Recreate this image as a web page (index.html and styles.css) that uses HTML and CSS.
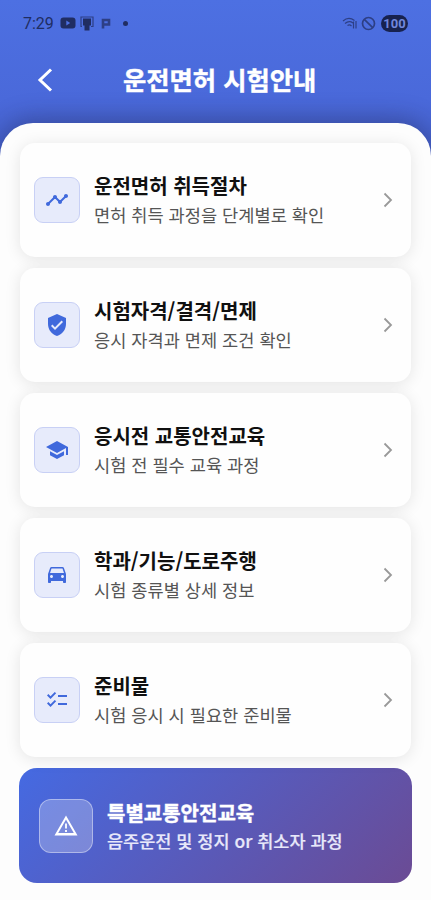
FILE: index.html
```
<!DOCTYPE html>
<html lang="ko">
<head>
    <meta charset="UTF-8">
    <meta name="viewport" content="width=device-width, initial-scale=1.0">
    <title>운전면허 시험안내</title>
    <link rel="stylesheet" href="styles.css">
</head>
<body>
    <div class="app">
        <div class="statusBar">
            <span class="time">7:29</span>
            <svg class="youtube" width="16" height="12" viewBox="0 0 16 12"><rect x="0.5" y="0.5" width="15" height="11" rx="3"/><path class="play" d="M6.3 3.6v4.8L10.2 6z"/></svg>
            <svg class="cast" width="14" height="15" viewBox="0 0 14 15"><path class="line" d="M2 10.5H1V1h12v9.500h-2"/><path d="M3 2.500h8v7H9.500V14.500h-5V9.500H3z"/></svg>
            <svg class="parking" width="10" height="11" viewBox="0 0 10 11"><path class="thick" d="M2 10.500V2h6v4.500H3"/></svg>
            <span class="dot"></span>
            <div class="statusRight">
                <svg width="16" height="13" viewBox="0 0 16 13"><path class="line" d="M1 4C4.500 1 9 1 12.500 3.500M3 6.500C6 4 9 4.500 11 6M5.500 8.500c1.500-1 2.500-1 4 .5M11.500 4.500v7M14 4v7.500"/></svg>
                <svg width="15" height="15" viewBox="0 0 15 15"><circle class="ring" cx="7.500" cy="7.500" r="6"/><path class="ring" d="M3.300 3.300l8.400 8.400"/></svg>
                <span class="battery">100</span>
            </div>
        </div>

        <div class="header">
            <svg class="back" width="16" height="24" viewBox="0 0 16 24"><path d="M14 1.500L3 12l11 10.500"/></svg>
            <h1>운전면허 시험안내</h1>
        </div>

        <div class="content">
            <div class="card">
                <div class="icon">
                    <svg viewBox="0 0 24 24"><path d="M23 8c0 1.100-.9 2-2 2-.18 0-.35-.02-.51-.07l-3.560 3.550c.05.16.07.34.07.52 0 1.100-.9 2-2 2s-2-.9-2-2c0-.18.02-.36.07-.52l-2.550-2.550c-.16.05-.34.07-.52.07s-.36-.02-.52-.07l-4.550 4.560c.05.16.07.33.07.51 0 1.100-.9 2-2 2s-2-.9-2-2 .9-2 2-2c.18 0 .35.02.51.07l4.560-4.550C8.020 9.360 8 9.180 8 9c0-1.100.9-2 2-2s2 .9 2 2c0 .18-.02.36-.07.52l2.550 2.550c.16-.05.34-.07.52-.07s.36.02.52.07l3.550-3.560C19.020 8.350 19 8.180 19 8c0-1.100.9-2 2-2s2 .9 2 2z"/></svg>
                </div>
                <div class="text">
                    <h2>운전면허 취득절차</h2>
                    <p>면허 취득 과정을 단계별로 확인</p>
                </div>
                <svg class="arrow" viewBox="0 0 10 16"><path d="M1.500 1.500L8 8l-6.500 6.500"/></svg>
            </div>

            <div class="card">
                <div class="icon">
                    <svg viewBox="0 0 24 24"><path d="M12 1L3 5v6c0 5.550 3.840 10.740 9 12 5.160-1.260 9-6.450 9-12V5l-9-4zm-2 16l-4-4 1.410-1.410L10 14.170l6.590-6.590L18 9l-8 8z"/></svg>
                </div>
                <div class="text">
                    <h2>시험자격/결격/면제</h2>
                    <p>응시 자격과 면제 조건 확인</p>
                </div>
                <svg class="arrow" viewBox="0 0 10 16"><path d="M1.500 1.500L8 8l-6.500 6.500"/></svg>
            </div>

            <div class="card">
                <div class="icon">
                    <svg viewBox="0 0 24 24"><path d="M5 13.180v4L12 21l7-3.820v-4L12 17l-7-3.820zM12 3L1 9l11 6 9-4.910V17h2V9L12 3z"/></svg>
                </div>
                <div class="text">
                    <h2>응시전 교통안전교육</h2>
                    <p>시험 전 필수 교육 과정</p>
                </div>
                <svg class="arrow" viewBox="0 0 10 16"><path d="M1.500 1.500L8 8l-6.500 6.500"/></svg>
            </div>

            <div class="card">
                <div class="icon">
                    <svg viewBox="0 0 24 24"><path d="M18.920 5.010C18.720 4.420 18.160 4 17.500 4h-11c-.66 0-1.210.42-1.420 1.010L3 11v8c0 .55.45 1 1 1h1c.55 0 1-.45 1-1v-1h12v1c0 .55.45 1 1 1h1c.55 0 1-.45 1-1v-8l-2.080-5.990zM6.500 15c-.83 0-1.500-.67-1.500-1.500S5.670 12 6.500 12s1.500.67 1.500 1.500S7.330 15 6.500 15zm11 0c-.83 0-1.500-.67-1.500-1.500s.67-1.500 1.500-1.500 1.500.67 1.500 1.500-.67 1.500-1.500 1.500zM5 10l1.500-4.500h11L19 10H5z"/></svg>
                </div>
                <div class="text">
                    <h2>학과/기능/도로주행</h2>
                    <p>시험 종류별 상세 정보</p>
                </div>
                <svg class="arrow" viewBox="0 0 10 16"><path d="M1.500 1.500L8 8l-6.500 6.500"/></svg>
            </div>

            <div class="card">
                <div class="icon">
                    <svg viewBox="0 0 24 24"><path d="M22 7h-9v2h9V7zm0 8h-9v2h9v-2zM5.540 11L2 7.460l1.410-1.410 2.120 2.120 4.240-4.240 1.410 1.410L5.540 11zm0 8L2 15.460l1.410-1.410 2.120 2.120 4.240-4.240 1.410 1.410L5.540 19z"/></svg>
                </div>
                <div class="text">
                    <h2>준비물</h2>
                    <p>시험 응시 시 필요한 준비물</p>
                </div>
                <svg class="arrow" viewBox="0 0 10 16"><path d="M1.500 1.500L8 8l-6.500 6.500"/></svg>
            </div>

            <div class="banner">
                <div class="icon">
                    <svg viewBox="0 0 24 24"><path d="M12 5.500L19.800 19H4.200L12 5.500M12 1.500L.5 21.500h23L12 1.500zm.9 14.500h-1.800v2h1.800v-2zm0-6.500h-1.800v5h1.800v-5z"/></svg>
                </div>
                <div class="text">
                    <h2>특별교통안전교육</h2>
                    <p>음주운전 및 정지 or 취소자 과정</p>
                </div>
            </div>
        </div>
    </div>
</body>
</html>
```
FILE: styles.css
```
* {
    margin: 0;
    padding: 0;
    box-sizing: border-box;
}

body {
    font-family: 'Noto Sans CJK KR', sans-serif;
    background-color: #fdfdfd;
}

.app {
    height: 900px;
    overflow: hidden;
    background: linear-gradient(#4d70e2 0, #4a69da 100px, #4560ca 160px);
}

.statusBar {
    display: flex;
    align-items: center;
    height: 46px;
    padding: 0 23px;
    color: #202d62;
    fill: #202d62;
}

.time {
    width: 37px;
    font-family: Roboto, sans-serif;
    font-size: 16px;
}

.play {
    fill: #4d70e2;
}

.cast {
    margin-left: 4px;
}

.parking {
    margin-left: 7px;
}

.line,
.thick,
.ring {
    fill: none;
    stroke: #2d3f85;
    stroke-width: 1.2;
}

.thick {
    stroke-width: 2.6;
}

.ring {
    stroke-width: 1.7;
}

.dot {
    width: 5px;
    height: 5px;
    margin-left: 12px;
    border-radius: 50%;
    background-color: #202d62;
}

.statusRight {
    display: flex;
    align-items: center;
    gap: 3px;
    margin-left: auto;
}

.battery {
    width: 27px;
    height: 17px;
    margin-left: 2px;
    border-radius: 9px;
    background-color: #17224f;
    color: #7187dc;
    font-family: Roboto, sans-serif;
    font-size: 13px;
    font-weight: 700;
    line-height: 17px;
    text-align: center;
}

.header {
    display: flex;
    align-items: center;
    height: 77px;
    padding: 0 37px 9px;
}

.back {
    fill: none;
    stroke: #fff;
    stroke-width: 3;
}

.header h1 {
    margin: 0 0 2px 70px;
    color: #fff;
    font-size: 25.3px;
    line-height: 36px;
    white-space: nowrap;
    -webkit-text-stroke: 0.4px #fff;
}

.content {
    height: 777px;
    padding: 20px 19px 0;
    border-radius: 33px 33px 0 0;
    background-color: #fdfdfd;
    box-shadow: 0 -4px 24px rgba(30, 35, 80, 0.4);
}

.card {
    position: relative;
    display: flex;
    align-items: center;
    height: 114px;
    margin: 0 1px 11.1px;
    padding: 0 18px 0 14px;
    border-radius: 15px;
    background-color: #fefefe;
    box-shadow: 0 2px 16px rgba(0, 0, 0, 0.1);
}

.icon {
    display: flex;
    align-items: center;
    justify-content: center;
    flex-shrink: 0;
    width: 46px;
    height: 46px;
    border: 1px solid #c8d0f5;
    border-radius: 9px;
    background-color: #e7ebfb;
}

.icon svg {
    width: 24px;
    height: 24px;
    fill: #4069dc;
}

.text {
    flex: 1;
    margin: 0 0 0 14px;
    white-space: nowrap;
}

.text h2 {
    color: #101010;
    font-size: 20px;
    line-height: 30px;
}

.text p {
    color: #555;
    font-size: 17.6px;
    line-height: 28px;
}

.arrow {
    width: 10px;
    height: 16px;
    fill: none;
    stroke: #999;
    stroke-width: 1.8;
}

.banner {
    display: flex;
    align-items: center;
    height: 115px;
    padding: 0 20px;
    border-radius: 18px;
    background: linear-gradient(135deg, #456ae2, #6b4b94);
}

.banner .icon {
    width: 54px;
    height: 54px;
    border: 1.500px solid rgba(255, 255, 255, 0.4);
    border-radius: 12px;
    background-color: rgba(255, 255, 255, 0.25);
}

.banner .icon svg {
    fill: #fff;
}

.banner .text {
    padding-top: 3px;
}

.banner h2 {
    color: #fff;
    line-height: 28px;
    -webkit-text-stroke: 0.4px #fff;
}

.banner p {
    color: #e8e8fa;
    font-size: 17.5px;
    font-weight: 500;
    -webkit-text-stroke: 0.2px #e8e8fa;
}
```
